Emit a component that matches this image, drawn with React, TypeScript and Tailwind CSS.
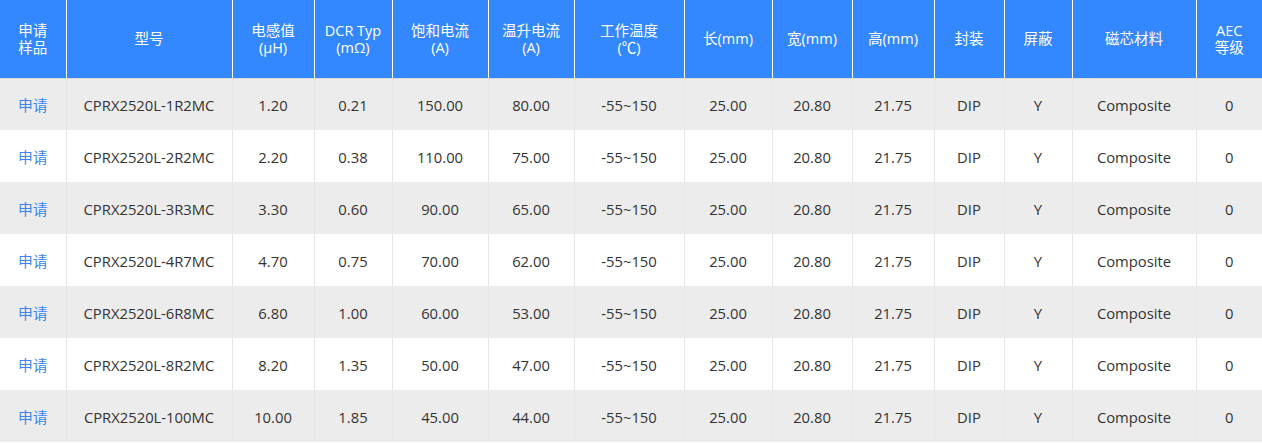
import React from "react";

const widths = [66, 166, 82, 78, 96, 86, 110, 88, 80, 82, 70, 68, 124, 66];
const headers: string[][] = [
  ["申请", "样品"],
  ["型号"],
  ["电感值", "(μH)"],
  ["DCR Typ", "(mΩ)"],
  ["饱和电流", "(A)"],
  ["温升电流", "(A)"],
  ["工作温度", "(℃)"],
  ["长(mm)"],
  ["宽(mm)"],
  ["高(mm)"],
  ["封装"],
  ["屏蔽"],
  ["磁芯材料"],
  ["AEC", "等级"],
];

const rows: string[][] = [
  ["CPRX2520L-1R2MC", "1.20", "0.21", "150.00", "80.00"],
  ["CPRX2520L-2R2MC", "2.20", "0.38", "110.00", "75.00"],
  ["CPRX2520L-3R3MC", "3.30", "0.60", "90.00", "65.00"],
  ["CPRX2520L-4R7MC", "4.70", "0.75", "70.00", "62.00"],
  ["CPRX2520L-6R8MC", "6.80", "1.00", "60.00", "53.00"],
  ["CPRX2520L-8R2MC", "8.20", "1.35", "50.00", "47.00"],
  ["CPRX2520L-100MC", "10.00", "1.85", "45.00", "44.00"],
];

export default function App() {
  return (
    <div
      className="w-[1262px] bg-white text-[14.8px] text-[#333333]"
      style={{ fontFamily: '"Open Sans", "Noto Sans CJK SC", sans-serif' }}
    >
      <table className="w-[1262px] table-fixed border-collapse">
        <colgroup>
          {widths.map((w, i) => (
            <col key={i} style={{ width: w }} />
          ))}
        </colgroup>
        <thead>
          <tr className="h-[78px] bg-[#3388ff] text-white">
            {headers.map((h, i) => (
              <th
                key={i}
                className={`p-0 text-center align-middle font-normal text-[14.5px] leading-[17px] border-b border-b-[#dddddd] ${
                  i > 0 ? "border-l border-l-white" : ""
                }`}
              >
                {h.map((line, j) => (
                  <div key={j}>{line}</div>
                ))}
              </th>
            ))}
          </tr>
        </thead>
        <tbody>
          {rows.map((r, ri) => {
            const cells = [
              r[0],
              r[1],
              r[2],
              r[3],
              r[4],
              "-55~150",
              "25.00",
              "20.80",
              "21.75",
              "DIP",
              "Y",
              "Composite",
              "0",
            ];
            return (
              <tr
                key={ri}
                className={`h-[52px] ${ri % 2 === 0 ? "bg-[#ececec]" : "bg-white"}`}
              >
                <td className="p-0 pt-[2px] text-center align-middle text-[#3b87f2]">
                  申请
                </td>
                {cells.map((c, ci) => (
                  <td
                    key={ci}
                    className="p-0 pt-[2px] text-center align-middle border-l border-l-[#e6e6e6]"
                  >
                    {c}
                  </td>
                ))}
              </tr>
            );
          })}
        </tbody>
      </table>
    </div>
  );
}
